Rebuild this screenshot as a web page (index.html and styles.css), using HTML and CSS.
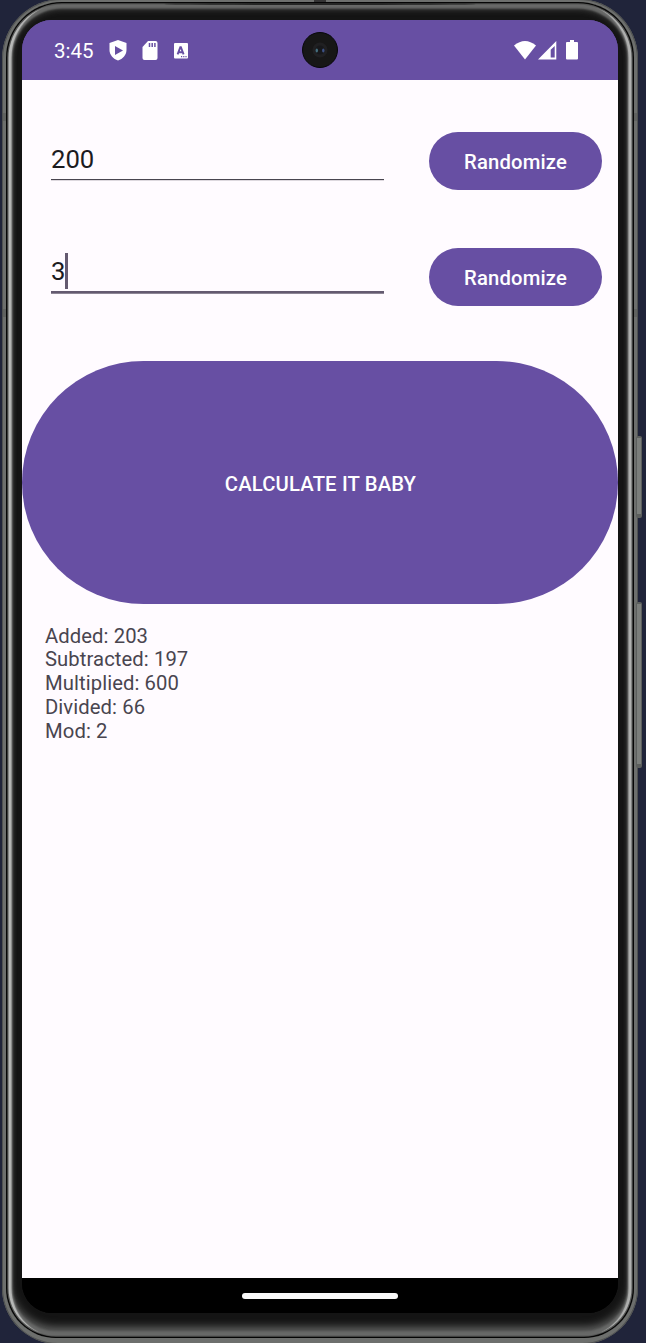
FILE: index.html
```html
<!DOCTYPE html>
<html lang="en">
<head>
<meta charset="utf-8">
<title>Calculator</title>
<link rel="stylesheet" href="styles.css">
</head>
<body>
<div class="phone">
  <span class="side-key power"></span>
  <span class="side-key volume"></span>
  <span class="antenna a-left"></span><span class="antenna a-right"></span><span class="antenna b-left"></span><span class="antenna b-right"></span>
  <span class="top-mark"></span><span class="earpiece"></span>
  <div class="bevel">
    <div class="screen">
      <header class="status">
        <span class="time">3:45</span>
        <svg class="shield" width="18" height="21" viewBox="0 0 18 21"><path fill="#fff" d="M9 0 17.500 3v7c0 5-3.700 9-8.500 10.500C4.200 19 .5 15 .5 10V3z"/><path fill="#674fa3" d="M6 6v9l8-4.500z"/></svg>
        <svg class="card" width="16" height="19" viewBox="0 0 16 19"><path fill="#fff" d="M6 0h7.500Q15.500 0 15.500 2v15q0 2-2 2h-11Q.5 19 .5 17V6z"/><path stroke="#674fa3" stroke-width="1.500" d="M7.500 2v4M10.200 2v4M12.900 2v4"/></svg>
        <svg class="letter" width="14" height="16" viewBox="0 0 14 16"><rect width="14" height="15.500" rx="1" fill="#fff"/><path fill="none" stroke="#674fa3" stroke-width="1.900" d="M3.600 11.300 6.300 4.200h.6L9.600 11.300M4.600 9.200h4"/><path stroke="#674fa3" stroke-width="1.200" stroke-dasharray="1.200 1" d="M7 13.700h6"/></svg>
        <svg class="signals" width="66" height="21" viewBox="0 0 66 21"><path fill="#fff" d="M0 5.500Q11-3.500 22 5.500L11 19.500z"/><path fill="#fff" fill-rule="evenodd" d="M24 19.500 42.300 1v18.500zM36.700 9.800V17.500h4V6z"/><path fill="#fff" d="M56 0h4v2h3q1 0 1 1v15.500q0 1-1 1H53q-1 0-1-1V3q0-1 1-1h3z"/></svg>
        <span class="camera"><svg width="36" height="36" viewBox="0 0 36 36"><circle cx="18" cy="18" r="17.500" fill="#171717" stroke="#08080c"/><circle cx="18" cy="18" r="7.500" fill="#202022"/><circle cx="18" cy="18" r="4.500" fill="#17181b"/><ellipse cx="14.800" cy="18.500" rx="1.200" ry="1.900" fill="#456f7e"/><ellipse cx="21.300" cy="18.500" rx="1.200" ry="1.900" fill="#3d5286"/></svg></span>
      </header>
      <main class="content">
        <div class="row first"><div class="field">200</div><button class="btn">Randomize</button></div>
        <div class="row second"><div class="field focused">3<i class="caret"></i></div><button class="btn">Randomize</button></div>
        <button class="calculate">CALCULATE IT BABY</button>
        <div class="results">Added: 203<br>Subtracted: 197<br>Multiplied: 600<br>Divided: 66<br>Mod: 2</div>
      </main>
      <footer class="nav"><span class="handle"></span></footer>
    </div>
  </div>
</div>
</body>
</html>
```
FILE: styles.css
```css
* { box-sizing: border-box; }
html, body { height: 100%; }
body { margin: 0; overflow: hidden; background: #20243a; font-family: Roboto, sans-serif; }
button { border: 0; padding: 0; color: #fff; background: #674fa3; font: 500 20.26px Roboto, sans-serif; letter-spacing: .15px; }

.phone {
  position: relative; width: 636px; height: 1345px; margin: -1px 0 0 2px; padding: 3px 4px 6px;
  border-radius: 60px 60px 56px 56px; background: #6d6f6d;
  box-shadow: inset 0 0 0 1px #505251;
}
.bevel {
  height: 1336px; padding: 18px 16px 24px 16px; border-radius: 56px 56px 50px 50px; background: #141414;
  box-shadow: inset 0 0 0 1.3px #050505, inset 0 0 0 2.500px #555655, inset 5.500px 0 1px 0 #b9bab9, inset -5.500px 0 1px 0 #b0b1b0, inset 0 0 2px 6.500px #686968, inset 0 3px 6px 4px #484948, inset 0 -8px 9px 3px #626362;
}
.screen { height: 1293px; display: flex; flex-direction: column; overflow: hidden; border-radius: 30px; background: linear-gradient(#674fa3 60px, #fffbff 60px 1258px, #000 1258px); }
.side-key { position: absolute; left: 634px; width: 6px; border: 1px solid #5c5f5d; border-width: 2px 1px 4px; border-radius: 2px; background: #7b7e7b; }
.power { top: 437px; height: 82px; }
.volume { top: 603px; height: 166px; }
.antenna { position: absolute; width: 3px; height: 8px; background: #606260; }
.a-left, .b-left { left: 1px; }
.a-right, .b-right { right: 1px; }
.a-left, .a-right { top: 114px; }
.b-left, .b-right { top: 310px; }
.top-mark { position: absolute; top: 1px; left: 312px; width: 12px; height: 2px; background: #333; }
.earpiece { position: absolute; z-index: 1; top: 4px; left: 162px; width: 312px; height: 2px; border-radius: 50%; background: #252625; }

.status { position: relative; flex: 0 0 60px; display: flex; align-items: center; padding: 0 38px 0 32px; background: #674fa3; color: #fff; }
.time { width: 55px; font-size: 20.500px; line-height: 24px; padding-top: 2px; }
.shield { margin-right: 15px; }
.card { margin: 0 16px 0 0; }
.letter { margin-top: 1px; }
.signals { margin-left: auto; }
.camera { position: absolute; left: 280px; top: 12px; width: 36px; height: 36px; }
.camera svg { display: block; }

.content { flex: 1; }
.row { display: flex; justify-content: space-between; align-items: flex-start; height: 58px; padding: 0 16px 0 29px; }
.first { margin-top: 52px; }
.second { margin-top: 58px; }
.field { display: flex; align-items: center; width: 333px; height: 48px; padding-top: 7px; border-bottom: 1px solid #49454f; box-shadow: 0 1px #ddd8de; color: #1c1b1f; font-size: 25.700px; line-height: 30px; }
.focused { height: 45px; padding-top: 2px; border-bottom: 2px solid #645a70; box-shadow: 0 1px #8d8595; }
.caret { width: 3px; height: 36px; background: #645a70; }
.btn { width: 173px; height: 58px; padding-top: 2px; border-radius: 29px; }
.calculate { display: block; width: 596px; height: 243px; margin-top: 55px; padding: 2px 0 0 1px; border-radius: 121.500px; }
.results { padding: 20.700px 23px; color: #49454f; font-size: 20.260px; line-height: 23.700px; letter-spacing: .08px; }
.nav { flex: 0 0 35px; display: flex; justify-content: center; padding-top: 15px; background: #000; }
.handle { width: 156px; height: 6px; border-radius: 3px; background: #fafafa; }
```
